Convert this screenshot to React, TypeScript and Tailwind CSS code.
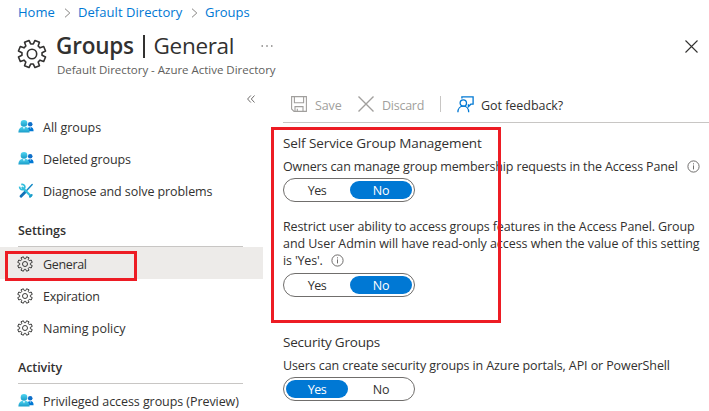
import type { ReactNode } from "react";

const gearOutline = (() => {
  const points: string[] = [];
  const add = (radius: number, degrees: number) => {
    const a = (degrees * Math.PI) / 180;
    points.push(`${(16 + radius * Math.cos(a)).toFixed(2)} ${(16 + radius * Math.sin(a)).toFixed(2)}`);
  };
  for (let i = 0; i < 8; i++) {
    const mid = i * 45 + 22.5;
    add(10.8, mid - 15);
    add(14.8, mid - 10);
    add(14.8, mid + 10);
    add(10.8, mid + 15);
  }
  return `M${points.join("L")}Z`;
})();

function Gear({ className, weight }: { className: string; weight: number }) {
  return (
    <svg viewBox="0 0 32 32" className={className} fill="none" stroke="#323130" strokeWidth={weight} strokeLinejoin="round">
      <path d={gearOutline} />
      <circle cx="16" cy="16" r="5" />
    </svg>
  );
}

function People() {
  return (
    <svg viewBox="0 0 16 16" className="size-4">
      <defs>
        <linearGradient id="front" x1="0" y1="0" x2="0" y2="1">
          <stop offset="0" stopColor="#50d5f0" />
          <stop offset="1" stopColor="#199bc8" />
        </linearGradient>
      </defs>
      <circle cx="12.2" cy="5.2" r="2.3" fill="#0f6fc9" />
      <path d="M9 12.2C9 9.4 10.4 8 12.3 8S15.6 9.4 15.6 12.2Z" fill="#0078d4" />
      <path d="M11.4 8.2l.9 1.7.9-1.7Z" fill="#b5dcf5" />
      <circle cx="6" cy="4.4" r="3.3" fill="url(#front)" />
      <path d="M.4 13.6C.4 9.6 2.4 7.7 6 7.7s5.6 1.9 5.6 5.9Z" fill="url(#front)" />
      <path d="M4.8 7.9L6 10.5l1.2-2.6Z" fill="#d9f5fc" />
    </svg>
  );
}

function Tools() {
  return (
    <svg viewBox="0 0 16 16" className="size-4" fill="none">
      <path d="M14.2 1.6L8.4 7.7" stroke="#0f86c4" strokeWidth="1.4" strokeLinecap="round" />
      <path d="M7.2 8.9L3 13.2" stroke="#1272b8" strokeWidth="2.8" strokeLinecap="round" />
      <path d="M4.5 4.7L12.8 13" stroke="#32bedd" strokeWidth="2.3" strokeLinecap="round" />
      <path d="M3.3 1.6A2.6 2.6 0 1 1 1.7 3.6" stroke="#32bedd" strokeWidth="1.7" />
      <path d="M12 13.7l1.7-1.7" stroke="#1b9bc9" strokeWidth="2" strokeLinecap="round" />
    </svg>
  );
}

function Info({ className }: { className: string }) {
  return (
    <svg viewBox="0 0 13 13" className={`size-[13px] shrink-0 ${className}`} fill="none" stroke="#605e5c">
      <circle cx="6.5" cy="6.5" r="5.6" strokeWidth="0.9" />
      <path d="M6.5 5.4v4M6.5 3.3v1.1" strokeWidth="0.9" />
    </svg>
  );
}

function NavItem({ icon, label, tracking = "", active = false }: { icon: ReactNode; label: string; tracking?: string; active?: boolean }) {
  return (
    <div className={`relative flex h-8 items-center gap-[9px] pt-[2px] pl-[18px] ${active ? "bg-[#edebe9]" : ""}`}>
      {icon}
      <span className={`whitespace-nowrap ${tracking}`}>{label}</span>
      {active && <div className="absolute top-1 left-[5px] h-[30px] w-[132px] border-[3px] border-[#ed1c24]" />}
    </div>
  );
}

function NavHeading({ label, tracking }: { label: string; tracking: string }) {
  return (
    <div className="mr-5 ml-[18px] flex h-[41px] items-center border-b border-[#c8c6c4] pt-[8px] font-semibold">
      <span className={tracking}>{label}</span>
    </div>
  );
}

function Toggle({ value }: { value: "Yes" | "No" }) {
  const on = "bg-[#0078d4] text-white";
  return (
    <div className="flex h-6 w-[132px] items-center justify-between rounded-full border border-[#706e6c] px-[2px]">
      <span className={`flex h-[18px] w-[62px] items-center justify-center rounded-full pt-px tracking-[-0.5px] ${value === "Yes" ? on : ""}`}>Yes</span>
      <span className={`flex h-[18px] w-[62px] items-center justify-center rounded-full pt-px tracking-[-0.15px] ${value === "No" ? on : ""}`}>No</span>
    </div>
  );
}

function Chevron() {
  return (
    <svg viewBox="0 0 7 10" className="mt-px h-[10px] w-[7px]" fill="none" stroke="#797775" strokeWidth="0.9">
      <path d="M1 .7L5.8 5 1 9.3" />
    </svg>
  );
}

export default function App() {
  const gear = <Gear className="-ml-px mr-px size-4" weight={1.9} />;
  return (
    <div className="relative h-[411px] w-[709px] overflow-hidden bg-white font-['Open_Sans','Noto_Sans',sans-serif] text-[12.5px] leading-[17px] text-[#323130]">
      <header className="h-[79px]">
        <nav className="flex h-6 items-center pt-px pl-[18px] text-[13px] text-[#0078d4]">
          <span className="w-[46px]">Home</span>
          <Chevron />
          <span className="ml-[7px] w-[113px] tracking-[0.05px]">Default Directory</span>
          <Chevron />
          <span className="ml-[7px]">Groups</span>
        </nav>
        <div className="flex pl-[17px]">
          <Gear className="mt-[15px] size-[30px]" weight={1.7} />
          <div className="ml-[9px] pt-[6px]">
            <h1 className="flex h-8 items-center text-[22.5px] leading-8">
              <span className="w-[87px] font-semibold tracking-[-0.2px]">Groups</span>
              <span className="h-[23px] w-[1.5px] bg-[#323130]" />
              <span className="ml-[9px] w-[107px] tracking-[-0.3px]">General</span>
              <svg viewBox="0 0 12 2" className="h-[2px] w-3" fill="#605e5c">
                <circle cx="1.2" cy="1" r=".8" />
                <circle cx="6" cy="1" r=".8" />
                <circle cx="10.8" cy="1" r=".8" />
              </svg>
            </h1>
            <p className="pl-px text-[11.5px] leading-4 tracking-[-0.02px] text-[#605e5c]">Default Directory - Azure Active Directory</p>
          </div>
          <svg viewBox="0 0 13 13" className="mt-4 mr-[11px] ml-auto size-[13px]" stroke="#323130" strokeWidth="1.1">
            <path d="M.5 .5l12 12M12.5 .5l-12 12" />
          </svg>
        </div>
      </header>
      <div className="flex">
        <aside className="w-[263px] shrink-0">
          <div className="flex h-[31px] justify-end pt-4 pr-2">
            <svg viewBox="0 0 8 8" className="size-2" fill="none" stroke="#605e5c" strokeWidth="0.9">
              <path d="M3.8 .5L.6 4l3.2 3.5M7.5 .5L4.3 4l3.2 3.5" />
            </svg>
          </div>
          <NavItem icon={<People />} label="All groups" />
          <NavItem icon={<People />} label="Deleted groups" tracking="tracking-[-0.1px]" />
          <NavItem icon={<Tools />} label="Diagnose and solve problems" tracking="tracking-[-0.08px]" />
          <NavHeading label="Settings" tracking="tracking-[-0.05px]" />
          <NavItem icon={gear} label="General" tracking="tracking-[-0.35px]" active />
          <NavItem icon={gear} label="Expiration" tracking="tracking-[-0.26px]" />
          <NavItem icon={gear} label="Naming policy" />
          <NavHeading label="Activity" tracking="tracking-[-0.09px]" />
          <NavItem icon={<People />} label="Privileged access groups (Preview)" tracking="tracking-[-0.07px]" />
        </aside>
        <main className="relative ml-5 flex-1">
          <div className="flex h-11 items-center border-b border-[#c8c6c4] pt-[7px] pl-2 text-[#a19f9d]">
            <svg viewBox="0 0 16 16" className="size-4" fill="none" stroke="#a19f9d" strokeWidth="1.1">
              <path d="M.6 .6h14.8v14.8H3L.6 13Z" />
              <path d="M3.4 .6v6.2h9.2V.6M4 15.4v-4.8h8v4.8M6.3 15v-2.2" />
            </svg>
            <span className="ml-2 w-[43px] pt-[2px] tracking-[-0.13px]">Save</span>
            <svg viewBox="0 0 16 16" className="size-4" stroke="#a19f9d" strokeWidth="1.4">
              <path d="M.5 .5l15 15M15.5 .5l-15 15" />
            </svg>
            <span className="ml-2 w-[58px] pt-[2px] tracking-[-0.26px]">Discard</span>
            <span className="h-4 w-px bg-[#c8c6c4]" />
            <svg viewBox="0 0 17 17" className="ml-4 size-[17px]" fill="none" stroke="#0078d4" strokeWidth="1.3">
              <circle cx="6.3" cy="7" r="3.2" />
              <path d="M.9 16.2c0-3.6 2.2-6 5.4-6s5.4 2.4 5.4 6" />
              <path d="M4.9 2.6V.9h11.2v7.3h-2.3l-2.4 2.4V8.2" />
            </svg>
            <span className="ml-[7px] pt-[2px] tracking-[-0.04px] text-[#323130]">Got feedback?</span>
          </div>
          <section className="pt-[11px]">
            <h2 className="text-[13.5px] leading-[18px] tracking-[-0.1px]">Self Service Group Management</h2>
            <div className="mt-[6px] flex items-center">
              <span className="whitespace-nowrap tracking-[-0.13px]">Owners can manage group membership requests in the Access Panel</span>
              <Info className="ml-[9px]" />
            </div>
            <div className="mt-[3px]">
              <Toggle value="No" />
            </div>
            <div className="mt-[16px] whitespace-nowrap">
              <p className="tracking-[-0.12px]">Restrict user ability to access groups features in the Access Panel. Group</p>
              <p className="tracking-[-0.065px]">and User Admin will have read-only access when the value of this setting</p>
              <p className="flex items-center">
                <span className="w-[39px] tracking-[-0.15px]">is 'Yes'.</span>
                <Info className="ml-[9px]" />
              </p>
            </div>
            <div className="mt-[4px]">
              <Toggle value="No" />
            </div>
          </section>
          <section className="pt-[36px]">
            <h2 className="text-[13.5px] leading-[18px] tracking-[-0.21px]">Security Groups</h2>
            <p className="mt-[6px] whitespace-nowrap tracking-[-0.1px]">Users can create security groups in Azure portals, API or PowerShell</p>
            <div className="mt-[3px]">
              <Toggle value="Yes" />
            </div>
          </section>
          <div className="absolute top-12 -left-3 h-[196px] w-[230px] border-[3px] border-[#ed1c24]" />
        </main>
      </div>
    </div>
  );
}
